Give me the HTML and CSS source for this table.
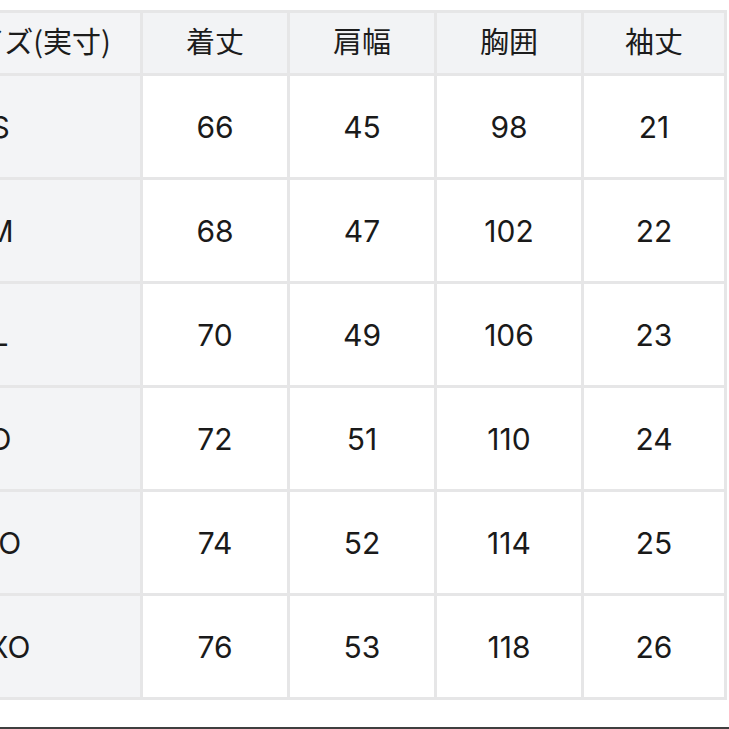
FILE: index.html
```html
<!DOCTYPE html>
<html lang="ja">
<head>
<meta charset="utf-8">
<link rel="stylesheet" href="styles.css">
</head>
<body>
<div class="page">
  <div class="size-table" role="table">
    <div class="cell head first">表記サイズ(実寸)</div>
    <div class="cell head">着丈</div>
    <div class="cell head">肩幅</div>
    <div class="cell head">胸囲</div>
    <div class="cell head">袖丈</div>

    <div class="cell first">S</div>
    <div class="cell num">66</div>
    <div class="cell num">45</div>
    <div class="cell num">98</div>
    <div class="cell num">21</div>

    <div class="cell first">M</div>
    <div class="cell num">68</div>
    <div class="cell num">47</div>
    <div class="cell num">102</div>
    <div class="cell num">22</div>

    <div class="cell first">L</div>
    <div class="cell num">70</div>
    <div class="cell num">49</div>
    <div class="cell num">106</div>
    <div class="cell num">23</div>

    <div class="cell first">O</div>
    <div class="cell num">72</div>
    <div class="cell num">51</div>
    <div class="cell num">110</div>
    <div class="cell num">24</div>

    <div class="cell first">XO</div>
    <div class="cell num">74</div>
    <div class="cell num">52</div>
    <div class="cell num">114</div>
    <div class="cell num">25</div>

    <div class="cell first">2XO</div>
    <div class="cell num">76</div>
    <div class="cell num">53</div>
    <div class="cell num">118</div>
    <div class="cell num">26</div>
  </div>
  <div class="bottom-rule"></div>
</div>
</body>
</html>
```
FILE: styles.css
```css
html, body {
  margin: 0;
  padding: 0;
  background: #ffffff;
  overflow: hidden;
}

.page {
  width: 729px;
  height: 729px;
  padding-top: 10px;
  box-sizing: border-box;
  display: flex;
  flex-direction: column;
}

.size-table {
  display: grid;
  grid-template-columns: 280px 144px 144px 144px 140px;
  grid-template-rows: 60px repeat(6, 101px);
  gap: 3px;
  padding: 3px;
  background: #e6e6e7;
  margin-left: -143px;
  width: max-content;
  font-family: "Inter", "Noto Sans CJK JP", sans-serif;
  color: #1a1a1a;
}

.cell {
  display: flex;
  align-items: center;
  justify-content: center;
  background: #ffffff;
  font-size: 30px;
  line-height: 1;
}

.head {
  background: #f2f3f5;
  font-family: "Noto Sans CJK JP", sans-serif;
  font-size: 29px;
  color: #1c1c1c;
  padding-bottom: 5px;
}

.first {
  background: #f3f4f6;
  font-family: "Inter", "Noto Sans CJK JP", sans-serif;
}

.head.first {
  font-family: "Noto Sans CJK JP", sans-serif;
}

.bottom-rule {
  margin-top: auto;
  height: 2px;
  background: #3f3f3f;
}
```
